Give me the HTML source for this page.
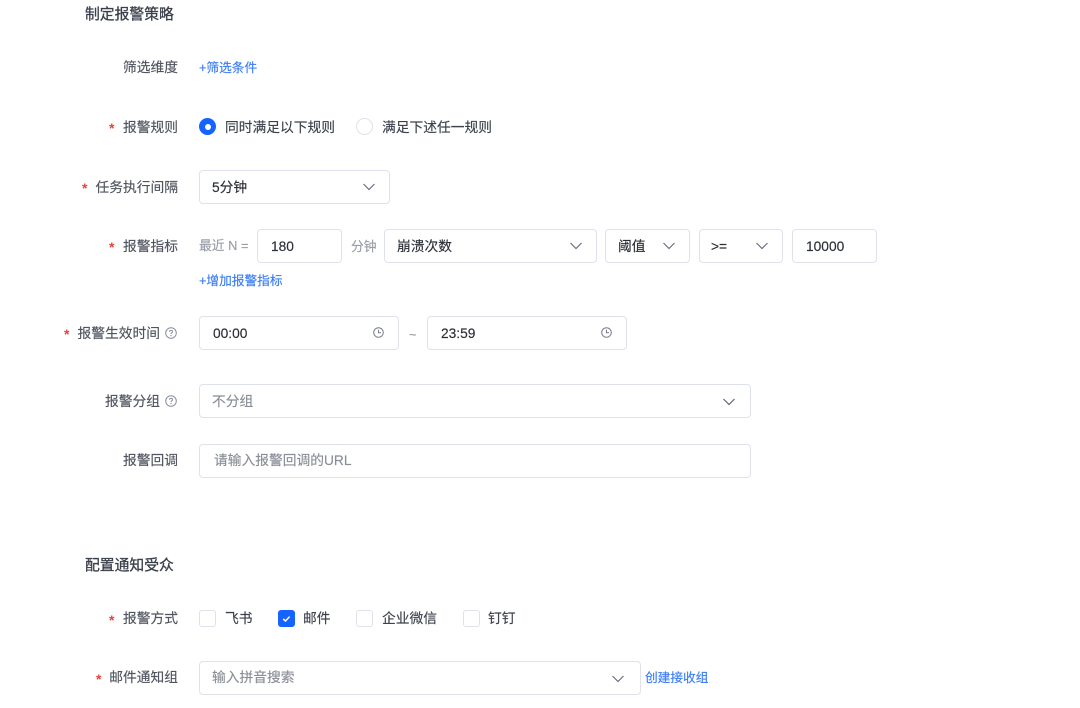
<!DOCTYPE html>
<html lang="zh">
<head>
<meta charset="utf-8">
<title>制定报警策略</title>
<style>
html,body{margin:0;padding:0;background:#fff;width:1080px;height:708px;overflow:hidden}
body{position:relative;font-family:"Liberation Sans","Noto Sans CJK SC",sans-serif;font-size:13.75px;color:#1d2129;filter:blur(.3px)}
.a{position:absolute;white-space:nowrap;line-height:20px;-webkit-text-stroke:.15px currentColor}
.h{font-size:14.8px;color:#3a3f4a;left:85px;-webkit-text-stroke:.3px currentColor}
.l{right:902px;color:#50555f;text-align:right}
.s{position:absolute;color:#e5443c;font-size:14px;font-weight:bold;line-height:20px}
.b{position:absolute;box-sizing:border-box;background:#fff;border:1px solid #dfe2ec;border-radius:4px}
.v{color:#2b2f36}
.p{color:#8a8e96}
.g{color:#9a9da8;font-size:12.8px}
.k{color:#3b7cf6;font-size:12.7px}
.o{color:#3d424c}
svg{position:absolute;overflow:visible}
.c{position:absolute;box-sizing:border-box;width:17px;height:17px;background:#fff;border:1px solid #dfe2ec;border-radius:3px}
</style>
</head>
<body>
<div class="a h" style="top:5px">制定报警策略</div>

<div class="a l" style="top:58px">筛选维度</div>
<div class="a k" style="left:199px;top:58px">+筛选条件</div>

<div class="s" style="left:109px;top:118px">*</div>
<div class="a l" style="top:118px">报警规则</div>
<div style="position:absolute;left:199px;top:118px;width:17px;height:17px;border-radius:50%;background:#1664ff"></div>
<div style="position:absolute;left:204.5px;top:123.5px;width:6px;height:6px;border-radius:50%;background:#fff"></div>
<div class="a o" style="left:225px;top:118px">同时满足以下规则</div>
<div style="position:absolute;box-sizing:border-box;left:356px;top:118px;width:17px;height:17px;border-radius:50%;background:#fff;border:1px solid #dfe2ec"></div>
<div class="a o" style="left:382px;top:118px">满足下述任一规则</div>

<div class="s" style="left:82px;top:178px">*</div>
<div class="a l" style="top:178px">任务执行间隔</div>
<div class="b" style="left:199px;top:170px;width:191px;height:34px"></div>
<div class="a v" style="left:212px;top:178px">5分钟</div>
<svg style="left:363px;top:183px" width="12" height="8" viewBox="0 0 12 8"><path d="M0.5 1L6 6.5L11.5 1" fill="none" stroke="#6b7080" stroke-width="1.2"/></svg>

<div class="s" style="left:109px;top:237px">*</div>
<div class="a l" style="top:237px">报警指标</div>
<div class="a g" style="left:199px;top:236px">最近 N =</div>
<div class="b" style="left:257px;top:229px;width:85px;height:34px"></div>
<div class="a v" style="left:271px;top:237px">180</div>
<div class="a g" style="left:351px;top:237px">分钟</div>
<div class="b" style="left:384px;top:229px;width:213px;height:34px"></div>
<div class="a v" style="left:397px;top:237px">崩溃次数</div>
<svg style="left:570px;top:242px" width="12" height="8" viewBox="0 0 12 8"><path d="M0.5 1L6 6.5L11.5 1" fill="none" stroke="#6b7080" stroke-width="1.2"/></svg>
<div class="b" style="left:605px;top:229px;width:85px;height:34px"></div>
<div class="a v" style="left:618px;top:237px">阈值</div>
<svg style="left:663px;top:242px" width="12" height="8" viewBox="0 0 12 8"><path d="M0.5 1L6 6.5L11.5 1" fill="none" stroke="#6b7080" stroke-width="1.2"/></svg>
<div class="b" style="left:699px;top:229px;width:84px;height:34px"></div>
<div class="a v" style="left:711px;top:237px">&gt;=</div>
<svg style="left:756px;top:242px" width="12" height="8" viewBox="0 0 12 8"><path d="M0.5 1L6 6.5L11.5 1" fill="none" stroke="#6b7080" stroke-width="1.2"/></svg>
<div class="b" style="left:792px;top:229px;width:85px;height:34px"></div>
<div class="a v" style="left:806px;top:237px">10000</div>
<div class="a k" style="left:199px;top:271px">+增加报警指标</div>

<div class="s" style="left:64px;top:324px">*</div>
<div class="a l" style="top:324px;right:920px">报警生效时间</div>
<svg style="left:165px;top:327px" width="12" height="12" viewBox="0 0 12 12"><circle cx="6" cy="6" r="5.3" fill="none" stroke="#8a8fa0" stroke-width="1"/><path d="M4.4 4.8C4.4 3.9 5.1 3.4 6 3.4C6.9 3.4 7.6 4 7.6 4.8C7.6 5.8 6 5.9 6 7" fill="none" stroke="#8a8fa0" stroke-width="1"/><circle cx="6" cy="8.6" r=".6" fill="#8a8fa0"/></svg>
<div class="b" style="left:199px;top:316px;width:200px;height:34px"></div>
<div class="a v" style="left:213px;top:324px">00:00</div>
<svg style="left:373px;top:327px" width="11" height="11" viewBox="0 0 11 11"><circle cx="5.5" cy="5.5" r="4.8" fill="none" stroke="#777b88" stroke-width="1"/><path d="M5.5 2.8V5.8H8" fill="none" stroke="#777b88" stroke-width="1"/></svg>
<div class="a g" style="left:409px;top:325px">~</div>
<div class="b" style="left:427px;top:316px;width:200px;height:34px"></div>
<div class="a v" style="left:441px;top:324px">23:59</div>
<svg style="left:601px;top:327px" width="11" height="11" viewBox="0 0 11 11"><circle cx="5.5" cy="5.5" r="4.8" fill="none" stroke="#777b88" stroke-width="1"/><path d="M5.5 2.8V5.8H8" fill="none" stroke="#777b88" stroke-width="1"/></svg>

<div class="a l" style="top:392px;right:920px">报警分组</div>
<svg style="left:165px;top:395px" width="12" height="12" viewBox="0 0 12 12"><circle cx="6" cy="6" r="5.3" fill="none" stroke="#8a8fa0" stroke-width="1"/><path d="M4.4 4.8C4.4 3.9 5.1 3.4 6 3.4C6.9 3.4 7.6 4 7.6 4.8C7.6 5.8 6 5.9 6 7" fill="none" stroke="#8a8fa0" stroke-width="1"/><circle cx="6" cy="8.6" r=".6" fill="#8a8fa0"/></svg>
<div class="b" style="left:199px;top:384px;width:552px;height:34px"></div>
<div class="a p" style="left:212px;top:392px">不分组</div>
<svg style="left:723px;top:398px" width="12" height="8" viewBox="0 0 12 8"><path d="M0.5 1L6 6.5L11.5 1" fill="none" stroke="#5f6472" stroke-width="1.2"/></svg>

<div class="a l" style="top:451px">报警回调</div>
<div class="b" style="left:199px;top:444px;width:552px;height:33.5px"></div>
<div class="a p" style="left:214px;top:451px">请输入报警回调的URL</div>

<div class="a h" style="top:556px">配置通知受众</div>

<div class="s" style="left:109px;top:610px">*</div>
<div class="a l" style="top:609px">报警方式</div>
<div class="c" style="left:199px;top:610px"></div>
<div class="a o" style="left:225px;top:609px">飞书</div>
<div class="c" style="left:278px;top:610px;background:#1664ff;border-color:#1664ff"></div>
<svg style="left:282px;top:615px" width="9" height="8" viewBox="0 0 9 8"><path d="M1.2 4L3.5 6L7.6 1.6" fill="none" stroke="#fff" stroke-width="1.5"/></svg>
<div class="a o" style="left:303px;top:609px">邮件</div>
<div class="c" style="left:356px;top:610px"></div>
<div class="a o" style="left:382px;top:609px">企业微信</div>
<div class="c" style="left:462.5px;top:610px"></div>
<div class="a o" style="left:488px;top:609px">钉钉</div>

<div class="s" style="left:96px;top:669px">*</div>
<div class="a l" style="top:668px">邮件通知组</div>
<div class="b" style="left:199px;top:661px;width:442px;height:34px"></div>
<div class="a p" style="left:212px;top:668px">输入拼音搜索</div>
<svg style="left:612px;top:675px" width="12" height="8" viewBox="0 0 12 8"><path d="M0.5 1L6 6.5L11.5 1" fill="none" stroke="#6b7080" stroke-width="1.2"/></svg>
<div class="a k" style="left:645px;top:668px">创建接收组</div>
</body>
</html>
